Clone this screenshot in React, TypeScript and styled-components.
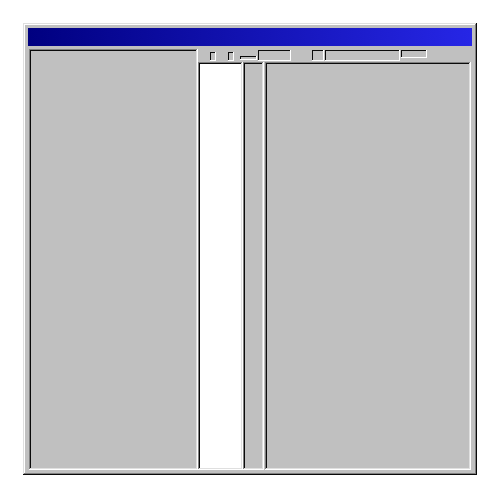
import styled, { createGlobalStyle } from "styled-components";

const GlobalStyle = createGlobalStyle`
  html, body {
    margin: 0;
    padding: 0;
    background: #ffffff;
    font-family: "Liberation Sans", Arial, sans-serif;
  }
`;

const raised = `
  box-shadow: inset -1px -1px #0a0a0a, inset 1px 1px #dfdfdf,
    inset -2px -2px #808080, inset 2px 2px #ffffff;
`;

const sunken = `
  box-shadow: inset -1px -1px #ffffff, inset 1px 1px #808080,
    inset -2px -2px #dfdfdf, inset 2px 2px #0a0a0a;
`;

const Page = styled.div`
  padding: 23px 0 0 23px;
`;

const Window = styled.div`
  ${raised}
  background: #c0c0c0;
  width: 454px;
  height: 452px;
  padding: 5px;
  box-sizing: border-box;
  display: flex;
  flex-direction: column;
  gap: 2px;
`;

const TitleBar = styled.div`
  height: 18px;
  flex-shrink: 0;
  background: linear-gradient(90deg, #000080, #2626e6);
`;

const Body = styled.div`
  flex: 1;
  display: flex;
  padding-left: 1px;
`;

const SidePanel = styled.div`
  ${sunken}
  width: 169px;
  margin-top: 1px;
  background: #c0c0c0;
`;

const Main = styled.div`
  flex: 1;
  display: flex;
  flex-direction: column;
`;

const Toolbar = styled.div`
  height: 14px;
  flex-shrink: 0;
  display: flex;
  align-items: flex-start;
  padding-top: 2px;
  box-sizing: border-box;
`;

const Slot = styled.div<{ $w: number; $h: number; $ml: number; $mt?: number }>`
  width: ${(p) => p.$w}px;
  height: ${(p) => p.$h}px;
  margin-left: ${(p) => p.$ml}px;
  margin-top: ${(p) => p.$mt ?? 0}px;
  flex-shrink: 0;
  background: #c0c0c0;
  box-shadow: inset -1px -1px #ffffff, inset 1px 1px #0a0a0a;
`;

const Content = styled.div`
  flex: 1;
  display: flex;
`;

const ListBox = styled.div`
  ${sunken}
  width: 45px;
  background: #ffffff;
`;

const Gutter = styled.div`
  ${sunken}
  width: 21px;
  background: #c0c0c0;
`;

const Pane = styled.div`
  ${sunken}
  flex: 1;
  margin: 0 1px 0 1px;
  background: #c0c0c0;
`;

export default function App() {
  return (
    <>
      <GlobalStyle />
      <Page>
        <Window>
          <TitleBar />
          <Body>
            <SidePanel />
            <Main>
              <Toolbar>
                <Slot $w={6} $h={9} $ml={12} $mt={2} />
                <Slot $w={6} $h={9} $ml={12} $mt={2} />
                <Slot $w={17} $h={4} $ml={6} $mt={6} />
                <Slot $w={33} $h={11} $ml={1} />
                <Slot $w={12} $h={11} $ml={21} />
                <Slot $w={75} $h={11} $ml={1} />
                <Slot $w={26} $h={8} $ml={1} />
              </Toolbar>
              <Content>
                <ListBox />
                <Gutter />
                <Pane />
              </Content>
            </Main>
          </Body>
        </Window>
      </Page>
    </>
  );
}
